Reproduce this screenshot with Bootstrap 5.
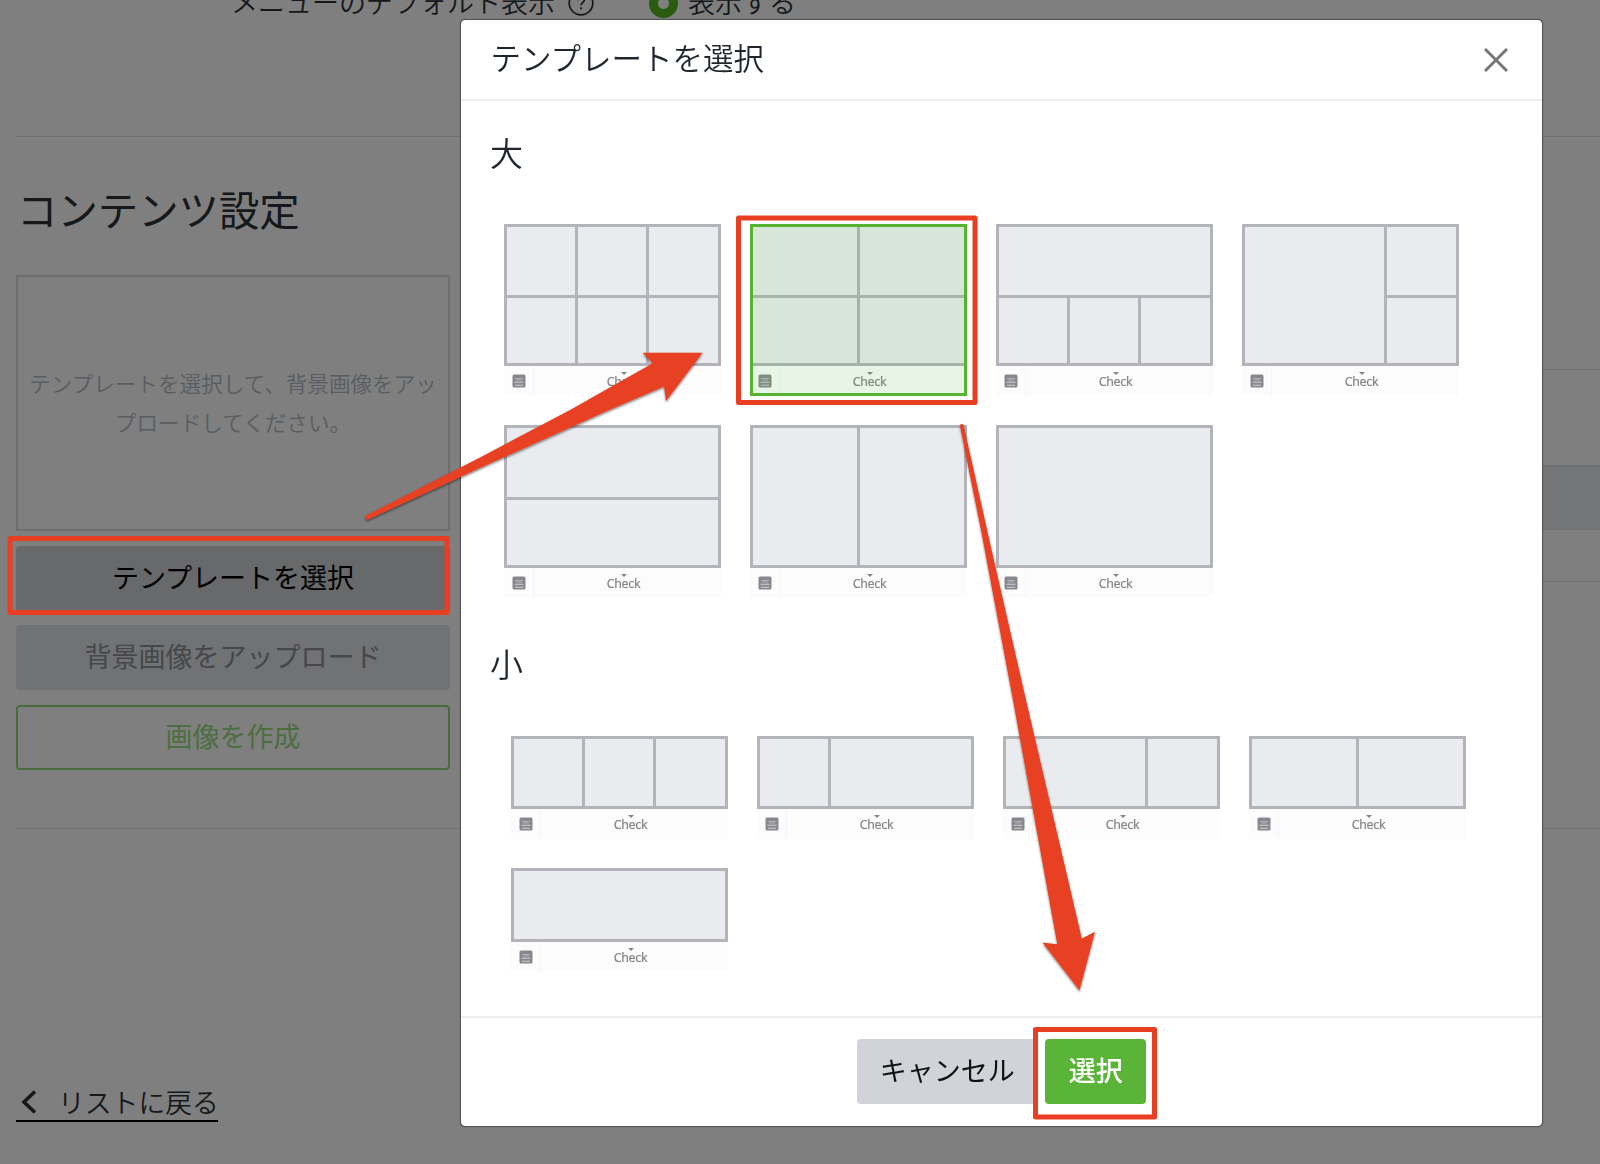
<!DOCTYPE html>
<html lang="ja">
<head>
<meta charset="utf-8">
<meta name="viewport" content="width=device-width, initial-scale=1">
<title>テンプレートを選択</title>
<link href="https://cdn.jsdelivr.net/npm/bootstrap@5.3.0/dist/css/bootstrap.min.css" rel="stylesheet">
<style>
  html, body { height: 1164px; overflow: hidden; }
  body { font-family: "Noto Sans CJK JP", sans-serif; font-size: 27px; color: #2c3238; font-weight: 350; }
  .page-back { height: 1164px; overflow: hidden; }
  .default-row { height: 135.5px; padding-left: 231px; }
  .default-row > div { height: 40px; margin-top: -18px; line-height: 40px; }
  .help-icon { width: 26px; height: 26px; margin: 1px 0 0 13px; }
  .radio-on { width: 29px; height: 29px; border: 9px solid #55b820; border-radius: 50%; margin: 2px 10px 0 55px; }
  .rule { height: 1.5px; background: #dfe0e4; flex: none; }
  .settings { height: 690.5px; padding-left: 16px; }
  .settings-left { width: 434px; }
  .settings-left h2 { font-size: 40.4px; line-height: 60px; margin: 42px 0 36px 1px; font-weight: 400; }
  .preview-box { height: 255.5px; border: 2px solid #dadde0; color: #b2bbc4; font-size: 21.6px; line-height: 39.5px; margin-bottom: 15px; padding-bottom: 1px; white-space: nowrap; }
  .btn { border-radius: 4px; font-size: 27px; line-height: 40px; padding: 0; }
  .side-btn { height: 65px; margin-bottom: 14.5px; padding-bottom: 3px; }
  .btn-pick, .btn-pick:hover { background: #d0d2d6; color: #000; }
  .btn-up, .btn-up:hover { background: #e0e4e8; color: #8c8f94; }
  .btn-make, .btn-make:hover { border: 2px solid #92d878; color: #98dc80; }
  .table-right { width: 58px; padding-top: 231.5px; }
  .table-right .band { height: 62px; background: #eaecf0; }
  .back-link { width: 202px; border-bottom: 2px solid #000; margin: 255px 0 0 16px; height: 38px; line-height: 38px; color: #2c3238; white-space: nowrap; font-size: 26.8px; }
  .back-link svg { width: 16px; height: 24px; margin: 0 21px 0 5px; flex: none; }
  .modal-backdrop { z-index: 10; }
  .modal { z-index: 20; overflow: hidden; }
  .modal-dialog { width: 1083px; max-width: none; margin: 19px 0 0 460px; }
  .modal-content { height: 1108px; border: 1px solid #555; border-radius: 5px; box-shadow: 0 0 1px #444; color: #1f262e; }
  .modal-header { height: 81px; padding: 0 34px 2px 29.5px; border-bottom: 2px solid #eceff0; }
  .modal-title { font-size: 30.5px; font-weight: 350; margin-top: -2px; }
  .close-icon { width: 24px; height: 24px; margin-top: 2px; }
  .modal-body { padding: 31px 0 0 29px; }
  .size-head { font-size: 33px; line-height: 40px; height: 40px; margin: 0 0 52px; font-weight: 350; }
  .size-head.second { margin: 45px 0 53px; }
  .tpl-list { display: grid; grid-template-columns: repeat(4, 217px); grid-template-rows: 171.5px 173px; gap: 29.5px 29px; margin-left: 13.5px; }
  .tpl-list.short { margin-left: 20.5px; grid-template-rows: 103px 104px; gap: 29px; }
  .tpl { position: relative; }
  .tpl-map { flex: 1; display: grid; gap: 3px; padding: 3px; background: #b2b4b9; }
  .tpl-map i { background: #eaebef; }
  .tpl-bar { height: 30px; background: #fcfcfc; color: #858587; font: 12.4px/14px "Noto Sans", sans-serif; }
  .tpl-key { width: 30px; height: 30px; border-right: 1px solid #f5f5f5; padding: 8px 0 0 8px; }
  .tpl-key svg { width: 14px; height: 14px; display: block; }
  .tpl-label { flex: 1; padding: 6px 7px 0 0; }
  .tpl-label svg { width: 6px; height: 3px; }
  .tpl-label span { letter-spacing: -.3px; height: 14px; -webkit-text-stroke: .2px #858587; }
  .picked::after { content: ""; position: absolute; inset: 0; border: 3px solid #55b332; background: rgba(60,180,30,.1); }
  .modal-footer { height: 110px; border-top: 2px solid #eceff0; padding: 0 0 1px; gap: 7.5px; }
  .modal-footer > * { margin: 0; }
  .foot-btn { height: 65px; padding-bottom: 4px; }
  .btn-cancel, .btn-cancel:hover { width: 181px; background: #d0d3d8; color: #111; }
  .btn-ok, .btn-ok:hover { width: 101px; background: #5ab437; color: #fff; font-weight: 500; }
  .marks { position: absolute; inset: 0; z-index: 30; pointer-events: none; }
</style>
</head>
<body>
<div class="page-back d-flex flex-column">
  <div class="default-row flex-shrink-0">
    <div class="d-flex align-items-center">
      <span>メニューのデフォルト表示</span>
      <svg class="help-icon" viewBox="0 0 26 26" fill="none" stroke="#2c3238" stroke-width="1.7"><circle cx="13" cy="13" r="11.8"/><path d="M9.7 10.3c0-4.5 6.8-4.2 6.6-.2-.1 2.2-3.2 2.4-3.2 5.2"/><path d="M13.1 17.3v2" stroke-width="2"/></svg>
      <span class="radio-on"></span>
      <span>表示する</span>
    </div>
  </div>
  <div class="rule ms-3"></div>
  <div class="settings d-flex justify-content-between flex-shrink-0">
    <div class="settings-left">
      <h2>コンテンツ設定</h2>
      <div class="preview-box d-flex align-items-center justify-content-center text-center">テンプレートを選択して、背景画像をアッ<br>プロードしてください。</div>
      <button class="btn side-btn btn-pick w-100 d-block">テンプレートを選択</button>
      <button class="btn side-btn btn-up w-100 d-block">背景画像をアップロード</button>
      <button class="btn side-btn btn-make w-100 d-block">画像を作成</button>
    </div>
    <div class="table-right">
      <div class="rule"></div>
      <div style="height:95px"></div>
      <div class="rule"></div>
      <div class="band"></div>
      <div class="rule"></div>
      <div style="height:50.5px"></div>
      <div class="rule"></div>
    </div>
  </div>
  <div class="rule ms-3"></div>
  <a class="back-link d-flex align-items-center text-decoration-none flex-shrink-0" href="#"><svg viewBox="0 0 16 24" fill="none" stroke="#2c3238" stroke-width="3.6"><path d="M14 1.5 3 12l11 10.500"/></svg>リストに戻る</a>
</div>

<div class="modal-backdrop show"></div>
<div class="modal d-block" tabindex="-1">
  <div class="modal-dialog">
    <div class="modal-content">
      <div class="modal-header d-flex align-items-center justify-content-between">
        <h5 class="modal-title">テンプレートを選択</h5>
        <svg class="close-icon" viewBox="0 0 24 24" stroke="#777" stroke-width="3"><path d="M1 1l22 22M23 1 1 23"/></svg>
      </div>
      <div class="modal-body">
        <h6 class="size-head">大</h6>
        <div class="tpl-list" id="large"></div>
        <h6 class="size-head second">小</h6>
        <div class="tpl-list short" id="small"></div>
      </div>
      <div class="modal-footer d-flex justify-content-center align-items-center flex-nowrap">
        <button class="btn foot-btn btn-cancel">キャンセル</button>
        <button class="btn foot-btn btn-ok">選択</button>
      </div>
    </div>
  </div>
</div>

<svg class="marks" width="1600" height="1164" viewBox="0 0 1600 1164">
  <defs><filter id="drop" x="-10%" y="-10%" width="120%" height="120%"><feDropShadow dx="0" dy="1.5" stdDeviation="1.3" flood-opacity=".5"/></filter></defs>
  <g fill="none" stroke="#e83f23" stroke-width="5" stroke-linejoin="round">
    <rect x="10" y="538.500" width="437" height="74"/>
    <rect x="738.500" y="218" width="236.500" height="184.500"/>
    <rect x="1035.500" y="1029.500" width="119" height="87.500"/>
  </g>
  <g fill="#e83f23" filter="url(#drop)">
    <path d="M366 515.500L480 457.500 570 410 652.700 363.300 642.700 352.700H702.500L666 401 664 386.500 607 411 480 468 368 519.500Q364 519.500 366 515.500Z"/>
    <path d="M960 426Q960 423 963.500 424.500L990 543 1026 700 1081.800 938.500 1095 931.700 1079.500 990.500 1042.500 942.500 1057.300 944.300 1013 700 981 530Z"/>
  </g>
</svg>

<script>
  // Each template: column tracks, row tracks, and one grid-area per cell
  const row2 = '68px 1fr';
  const large = [
    ['1fr 1fr 1fr', row2, ['auto','auto','auto','auto','auto','auto']],
    ['1fr 1fr', row2, ['auto','auto','auto','auto'], true],
    ['1fr 1fr 1fr', row2, ['1/1/2/4','auto','auto','auto']],
    ['1fr 1fr 1fr', row2, ['1/1/3/3','auto','auto']],
    ['1fr', '69px 1fr', ['auto','auto']],
    ['1fr 1fr', '1fr', ['auto','auto']],
    ['1fr', '1fr', ['auto']]
  ];
  const small = [
    ['1fr 1fr 1fr', '1fr', ['auto','auto','auto']],
    ['1fr 1fr 1fr', '1fr', ['auto','1/2/2/4']],
    ['1fr 1fr 1fr', '1fr', ['1/1/2/3','auto']],
    ['1fr 1fr', '1fr', ['auto','auto']],
    ['1fr', '1fr', ['auto']]
  ];
  const card = ([cols, rows, cells, picked]) => `
    <div class="tpl d-flex flex-column${picked ? ' picked' : ''}">
      <div class="tpl-map" style="grid-template-columns:${cols};grid-template-rows:${rows}">${cells.map(a => `<i style="grid-area:${a}"></i>`).join('')}</div>
      <div class="tpl-bar d-flex">
        <div class="tpl-key"><svg viewBox="0 0 14 14"><rect x=".5" y=".5" width="13" height="13" rx="1.500" fill="#87888d"/><path d="M3 4.500h8M4 6h6" stroke="#b0b1b5" stroke-width="1.200"/><path d="M2.500 8.300h9M3 11.200h8" stroke="#d0d0d4" stroke-width="1.100"/></svg></div>
        <div class="tpl-label d-flex flex-column align-items-center"><svg viewBox="0 0 6 3"><path d="M0 0h6L3 3z" fill="#858587"/></svg><span>Check</span></div>
      </div>
    </div>`;
  document.getElementById('large').innerHTML = large.map(card).join('');
  document.getElementById('small').innerHTML = small.map(card).join('');
</script>
<script src="https://cdn.jsdelivr.net/npm/bootstrap@5.3.0/dist/js/bootstrap.bundle.min.js"></script>
</body>
</html>
